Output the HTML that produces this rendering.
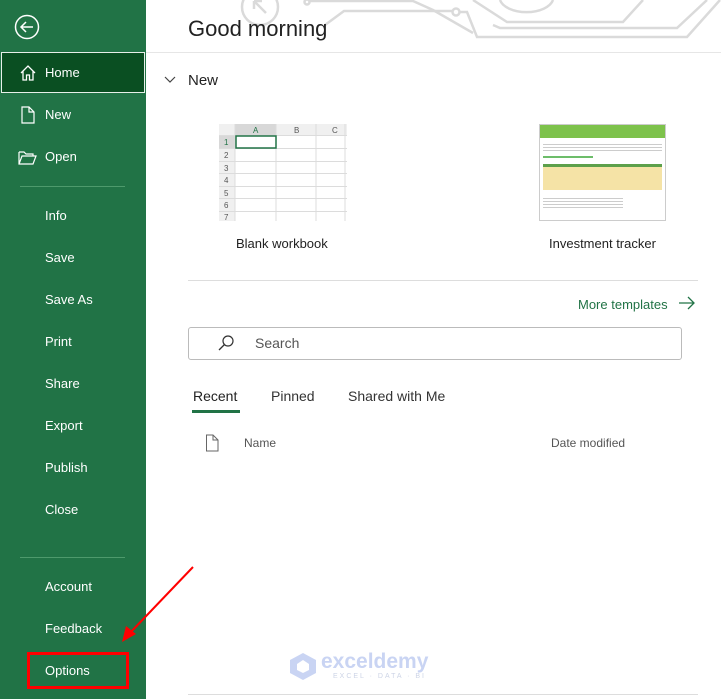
<!DOCTYPE html>
<html><head><meta charset="utf-8"><style>
*{margin:0;padding:0;box-sizing:border-box}
body{width:721px;height:699px;overflow:hidden;background:#fff;font-family:"Liberation Sans",sans-serif;position:relative}
.side{position:absolute;left:0;top:0;width:146px;height:699px;background:#217346;color:#fff}
.it{position:absolute;left:45px;font-size:13px;color:#fff}
.sep{position:absolute;left:20px;width:105px;height:1px;background:#4e9a6c}
.abs{position:absolute}
</style></head><body>
<div class="side">
<svg class="abs" style="left:14px;top:14px" width="26" height="26" viewBox="0 0 26 26"><circle cx="13" cy="13" r="11.5" fill="none" stroke="#fff" stroke-width="1.5"/><path d="M19 13H7M12 8L7 13L12 18" fill="none" stroke="#fff" stroke-width="1.5"/></svg>
<div class="abs" style="left:1px;top:52px;width:144px;height:41px;background:#0a4f22;border:1px solid #e8f0ea"></div>
<svg class="abs" style="left:19px;top:64px" width="18" height="18" viewBox="0 0 18 18"><path d="M2 9L9 2L16 9M4 7V16H7.5V11H10.5V16H14V7" fill="none" stroke="#fff" stroke-width="1.3"/></svg>
<div class="it" style="top:65px">Home</div>
<svg class="abs" style="left:20px;top:106px" width="16" height="18" viewBox="0 0 16 18"><path d="M2 1H9L14 6V17H2Z M9 1V6H14" fill="none" stroke="#fff" stroke-width="1.2"/></svg>
<div class="it" style="top:107px">New</div>
<svg class="abs" style="left:18px;top:150px" width="19" height="15" viewBox="0 0 19 15"><path d="M1 2H6L8 4H15V6 M1 2V14H15L18 6H4L1 14" fill="none" stroke="#fff" stroke-width="1.2"/></svg>
<div class="it" style="top:149px">Open</div>
<div class="sep" style="top:186px"></div>
<div class="it" style="top:208px">Info</div>
<div class="it" style="top:250px">Save</div>
<div class="it" style="top:292px">Save As</div>
<div class="it" style="top:334px">Print</div>
<div class="it" style="top:376px">Share</div>
<div class="it" style="top:418px">Export</div>
<div class="it" style="top:460px">Publish</div>
<div class="it" style="top:502px">Close</div>
<div class="sep" style="top:557px"></div>
<div class="it" style="top:579px">Account</div>
<div class="it" style="top:621px">Feedback</div>
<div class="abs" style="left:27px;top:652px;width:102px;height:37px;border:3px solid #f00"></div>
<div class="it" style="top:663px">Options</div>
</div>
<svg class="abs" style="left:146px;top:0" width="575" height="60" viewBox="146 0 575 60" fill="none" stroke="#dadada" stroke-width="2.5">
<circle cx="260" cy="7" r="18"/><path d="M254 1L266 13M254 1V9M254 1H262"/>
<path d="M309 1H413L433 10L473 33"/><circle cx="307" cy="2" r="2.5"/>
<path d="M325 25L344 11H453"/><circle cx="456" cy="12" r="3.5"/>
<path d="M460 12H467L477 37H687L720 0"/>
<path d="M473 0L507 22H623L643 0"/>
<path d="M493 25L500 28H677L707 0"/>
<path d="M500 0A27 15 0 0 0 553 0"/>
</svg>
<div class="abs" style="left:188px;top:16px;font-size:22px;color:#222">Good morning</div>
<div class="abs" style="left:146px;top:52px;width:575px;height:1px;background:#e6e6e6"></div>
<svg class="abs" style="left:164px;top:75px" width="12" height="10"><path d="M1 2L6 7L11 2" fill="none" stroke="#444" stroke-width="1.2"/></svg>
<div class="abs" style="left:188px;top:72px;font-size:15px;color:#222">New</div>
<svg class="abs" style="left:219px;top:124px" width="128" height="97" viewBox="0 0 128 97">
<rect x="0" y="0" width="128" height="97" fill="#fff"/>
<rect x="0" y="0" width="128" height="11" fill="#f0f0f0"/><rect x="16" y="0" width="41" height="11" fill="#d8d8d8"/>
<rect x="0" y="0" width="16" height="97" fill="#f0f0f0"/><rect x="0" y="12" width="16" height="12" fill="#d8d8d8"/>
<g stroke="#dcdcdc" stroke-width="1"><path d="M16 0V97M57 0V97M97 0V97M126 0V97"/><path d="M0 11.5H128M0 24.5H128M0 37.5H128M0 49.5H128M0 62.5H128M0 74.5H128M0 87.5H128"/></g>
<rect x="17" y="12" width="40" height="12" fill="none" stroke="#217346" stroke-width="1.5"/>
<g font-size="8" fill="#555" font-family="Liberation Sans"><text x="34" y="9" fill="#217346">A</text><text x="75" y="9">B</text><text x="113" y="9">C</text>
<text x="5" y="21" fill="#217346">1</text><text x="5" y="34">2</text><text x="5" y="47">3</text><text x="5" y="59">4</text><text x="5" y="72">5</text><text x="5" y="84">6</text><text x="5" y="96">7</text></g>
</svg>
<div class="abs" style="left:236px;top:236px;font-size:13px;color:#222">Blank workbook</div>
<div class="abs" style="left:539px;top:124px;width:127px;height:97px;border:1px solid #ccc;background:#fff">
<div style="height:13px;background:#7dc24b"></div>
<div style="margin:4px 3px;height:10px;background:repeating-linear-gradient(#fff 0 2px,#ccc 2px 3px)"></div>
<div style="margin:2px 3px;width:50px;height:2px;background:#6dbd6a"></div>
<div style="margin:6px 3px;height:26px;background:#f5e3a6;border-top:3px solid #5da04b"></div>
<div style="margin:4px 3px;width:80px;height:12px;background:repeating-linear-gradient(#fff 0 2px,#ccc 2px 3px)"></div>
</div>
<div class="abs" style="left:549px;top:236px;font-size:13px;color:#222">Investment tracker</div>
<div class="abs" style="left:188px;top:280px;width:510px;height:1px;background:#ddd"></div>
<div class="abs" style="left:578px;top:297px;font-size:13px;color:#217346">More templates</div>
<svg class="abs" style="left:678px;top:296px" width="18" height="14"><path d="M1 7H16M10 1L16 7L10 13" fill="none" stroke="#217346" stroke-width="1.3"/></svg>
<div class="abs" style="left:188px;top:327px;width:494px;height:33px;border:1px solid #bbb;border-radius:3px"></div>
<svg class="abs" style="left:217px;top:334px" width="18" height="18"><circle cx="11" cy="7" r="5" fill="none" stroke="#333" stroke-width="1.2"/><path d="M7.5 10.5L2 16" stroke="#333" stroke-width="1.3"/></svg>
<div class="abs" style="left:255px;top:335px;font-size:14px;color:#555">Search</div>
<div class="abs" style="left:193px;top:388px;font-size:14px;color:#222">Recent</div>
<div class="abs" style="left:192px;top:410px;width:48px;height:3px;background:#217346"></div>
<div class="abs" style="left:271px;top:388px;font-size:14px;color:#333">Pinned</div>
<div class="abs" style="left:348px;top:388px;font-size:14px;color:#333">Shared with Me</div>
<svg class="abs" style="left:205px;top:434px" width="15" height="18"><path d="M1.5 1H8L13 6V17H1.5Z M8 1V6H13" fill="none" stroke="#666" stroke-width="1"/></svg>
<div class="abs" style="left:244px;top:436px;font-size:12px;color:#555">Name</div>
<div class="abs" style="left:551px;top:436px;font-size:12px;color:#555">Date modified</div>
<svg class="abs" style="left:118px;top:565px" width="80" height="80"><path d="M75 2L10 70" stroke="#f00" stroke-width="2"/><path d="M4 77L8 61L18 69Z" fill="#f00"/></svg>
<svg class="abs" style="left:288px;top:651px" width="30" height="30"><path d="M15 2L28 9V22L15 29L2 22V9Z" fill="#c9d4f3"/><path d="M15 9L21 13V19L15 22L9 19V13Z" fill="#fff"/></svg>
<div class="abs" style="left:321px;top:650px;font-size:21px;font-weight:bold;color:#c9d4f3">exceldemy</div>
<div class="abs" style="left:333px;top:673px;font-size:7px;letter-spacing:2px;color:#cdd4e6">EXCEL · DATA · BI</div>
<div class="abs" style="left:188px;top:694px;width:510px;height:1px;background:#ddd"></div>
</body></html>
